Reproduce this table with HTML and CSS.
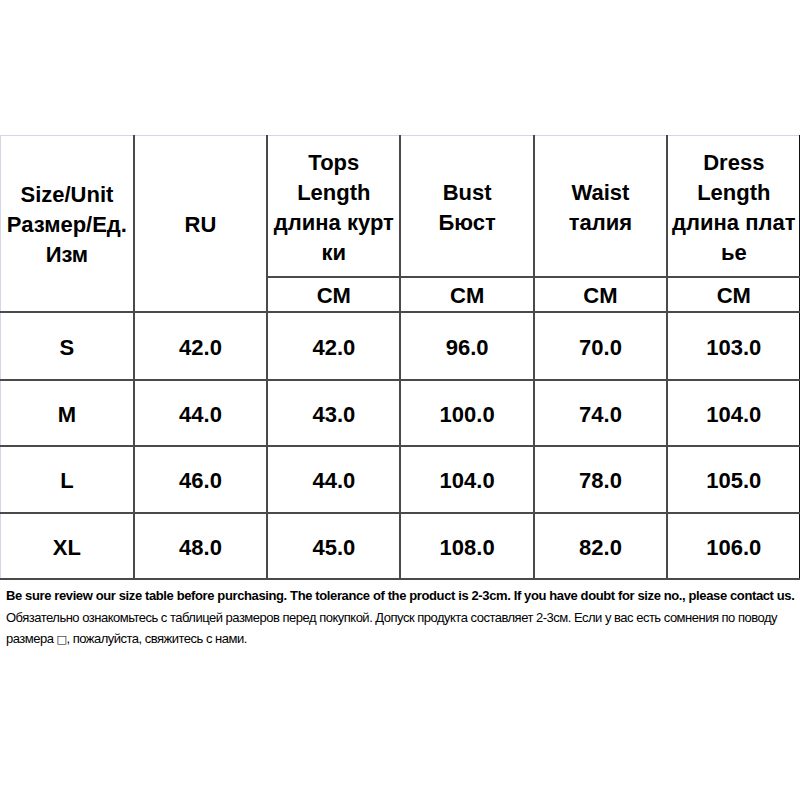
FILE: index.html
```html
<!DOCTYPE html>
<html lang="ru">
<head>
<meta charset="utf-8">
<title>Size table</title>
<link rel="stylesheet" href="styles.css">
</head>
<body>
<div class="page">
  <table class="sizes">
    <colgroup>
      <col class="c"><col class="c"><col class="c"><col class="c"><col class="c"><col class="c">
    </colgroup>
    <tr class="h1">
      <th rowspan="2" class="first">Size/Unit<br>Размер/Ед.<br>Изм</th>
      <th rowspan="2">RU</th>
      <th>Tops<br>Length<br>длина курт<br>ки</th>
      <th>Bust<br>Бюст</th>
      <th>Waist<br>талия</th>
      <th class="last">Dress<br>Length<br>длина плат<br>ье</th>
    </tr>
    <tr class="h2">
      <th>CM</th><th>CM</th><th>CM</th><th class="last">CM</th>
    </tr>
    <tr class="r top"><td class="first">S</td><td>42.0</td><td>42.0</td><td>96.0</td><td>70.0</td><td class="last">103.0</td></tr>
    <tr class="r b"><td class="first">M</td><td>44.0</td><td>43.0</td><td>100.0</td><td>74.0</td><td class="last">104.0</td></tr>
    <tr class="r a"><td class="first">L</td><td>46.0</td><td>44.0</td><td>104.0</td><td>78.0</td><td class="last">105.0</td></tr>
    <tr class="r b"><td class="first">XL</td><td>48.0</td><td>45.0</td><td>108.0</td><td>82.0</td><td class="last">106.0</td></tr>
  </table>
  <div class="note">
    <p class="en">Be sure review our size table before purchasing. The tolerance of the product is 2-3cm. If you have doubt for size no., please contact us.</p>
    <p class="ru">Обязательно ознакомьтесь с таблицей размеров перед покупкой. Допуск продукта составляет 2-3см. Если у вас есть сомнения по поводу<br>размера <span class="tofu">□</span>, пожалуйста, свяжитесь с нами.</p>
  </div>
</div>
</body>
</html>
```
FILE: styles.css
```css
html, body {
  margin: 0;
  padding: 0;
  background: #ffffff;
}
.page {
  width: 800px;
  padding-top: 135px;
  font-family: "Liberation Sans", Arial, sans-serif;
  color: #000;
  overflow: hidden;
}
.sizes {
  width: 800px;
  border-collapse: collapse;
  table-layout: fixed;
}
.sizes .c {
  width: 133.33px;
}
.sizes th,
.sizes td {
  border: 2px solid #4a4a4a;
  padding: 3px 0 0 0;
  text-align: center;
  vertical-align: middle;
  font-size: 22px;
  font-weight: bold;
  line-height: 30px;
}
.sizes .h1 th {
  border-top: 1px solid #d6d6e6;
  height: 137px;
}
.sizes .first {
  border-left: 1px solid #d6d6e6;
}
.sizes .last {
  border-right: 2px solid #111;
}
.sizes .h2 th {
  height: 30px;
  border-top-width: 1px;
}
.sizes .r.top td {
  height: 63px;
}
.sizes .r.a td {
  height: 62px;
}
.sizes .r.b td {
  height: 61px;
}
.note {
  padding: 5px 0 0 6px;
}
.note p {
  margin: 0;
  font-size: 13px;
  line-height: 21.5px;
  white-space: nowrap;
}
.note .en {
  font-weight: bold;
  letter-spacing: -0.38px;
}
.note .ru {
  letter-spacing: -0.5px;
}
.note .tofu {
  font-size: 11px;
  font-family: "DejaVu Sans", sans-serif;
}
```
